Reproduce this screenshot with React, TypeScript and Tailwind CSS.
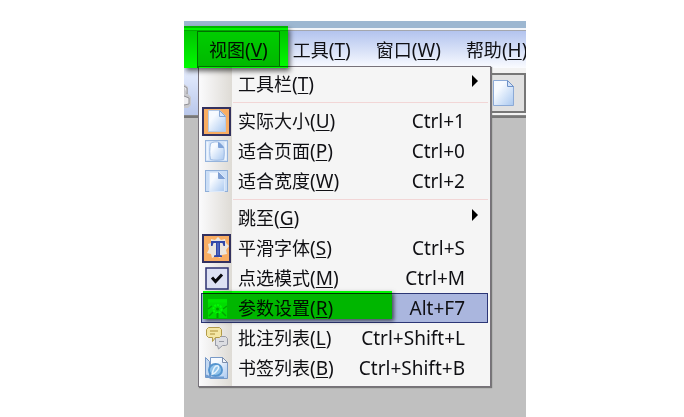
import React from 'react';

const FONT = "font-['Noto_Sans','Noto_Sans_CJK_SC',sans-serif]";

type IconName = 'page' | 'fitPage' | 'fitWidth' | 'smooth' | 'check' | 'settings' | 'comments' | 'bookmarks';

interface MenuEntry {
    label: string;
    mnemonic: string;
    shortcut?: string;
    icon?: IconName;
    submenu?: boolean;
    checked?: boolean;
    active?: boolean;
}

const GROUPS: MenuEntry[][] = [
    [{ label: '工具栏', mnemonic: 'T', submenu: true }],
    [
        { label: '实际大小', mnemonic: 'U', shortcut: 'Ctrl+1', icon: 'page', checked: true },
        { label: '适合页面', mnemonic: 'P', shortcut: 'Ctrl+0', icon: 'fitPage' },
        { label: '适合宽度', mnemonic: 'W', shortcut: 'Ctrl+2', icon: 'fitWidth' },
    ],
    [
        { label: '跳至', mnemonic: 'G', submenu: true },
        { label: '平滑字体', mnemonic: 'S', shortcut: 'Ctrl+S', icon: 'smooth', checked: true },
        { label: '点选模式', mnemonic: 'M', shortcut: 'Ctrl+M', icon: 'check' },
        { label: '参数设置', mnemonic: 'R', shortcut: 'Alt+F7', icon: 'settings', active: true },
        { label: '批注列表', mnemonic: 'L', shortcut: 'Ctrl+Shift+L', icon: 'comments' },
        { label: '书签列表', mnemonic: 'B', shortcut: 'Ctrl+Shift+B', icon: 'bookmarks' },
    ],
];

const MENUS = [
    { label: '视图', mnemonic: 'V', open: true },
    { label: '工具', mnemonic: 'T' },
    { label: '窗口', mnemonic: 'W' },
    { label: '帮助', mnemonic: 'H' },
];

const Icon: React.FC<{ name: IconName }> = ({ name }) => (
    <svg viewBox="0 0 24 24" className="size-6 shrink-0" aria-hidden="true">
        {name === 'page' && (
            <>
                <path d="M3.500 1.500h11.500l5.500 5.500v15.500h-17z" fill="url(#sheet)" stroke="#b5cae6" />
                <path d="M14.500 1.500v6h6z" fill="#d7e5f8" stroke="#86a6d4" />
            </>
        )}
        {name === 'fitPage' && (
            <>
                <rect x="0.500" y="1.500" width="22" height="21" fill="#d3e3f8" stroke="#96b4dc" />
                <path d="M2.500 3v18M20.500 3v18" stroke="#eef5fe" strokeWidth="2" />
                <path d="M5.500 4.500c3-2 6-2 9-1l4 4c1 4 1 9 0 13-4 1-9 1-13 0-1-5-1-11 0-16z" fill="url(#sheet)" stroke="#9fbce4" />
                <path d="M13.500 3.500v5h5z" fill="#7fa3d8" stroke="#7fa3d8" />
            </>
        )}
        {name === 'fitWidth' && (
            <>
                <rect x="0.500" y="1.500" width="22" height="21" fill="#cbdef6" stroke="#8fafd9" />
                <path d="M4.500 3.500h10l5 5v14h-15z" fill="url(#sheet)" stroke="#dce9fa" />
                <path d="M13.500 3.500v6h6z" fill="#7fa0d4" stroke="#7fa0d4" />
            </>
        )}
        {name === 'smooth' && (
            <>
                <path d="M3 8l3-1 0-4 4 1 3-3 3 3 4-1 1 4 3 3-3 4 1 4-5 1-2 3-4-2-4 2-1-4-4-1 2-4z" fill="#ebe6de" />
                <path d="M6 5h14v5h-1.500l-1-3h-2.500v12l2 .5V21H9v-1.500l2-.5V7H8.500l-1 3H6z" fill="#3148a8" />
                <path d="M13 7v12" stroke="#6d83d2" />
            </>
        )}
        {name === 'check' && (
            <>
                <rect x="1" y="2" width="22" height="21" fill="#dde1f3" stroke="#2c3272" strokeWidth="1.500" />
                <path d="M7 11.500l3.500 4L17 8.500" fill="none" stroke="#08080c" strokeWidth="3" />
            </>
        )}
        {name === 'settings' && (
            <>
                <rect x="2.500" y="2.500" width="20" height="20" fill="#b9dcc6" stroke="#8bb898" />
                <path d="M3 5h19" stroke="#d9e6f6" strokeWidth="3" />
                <path d="M3 13l4-3M22 10l-4 3M4 20l4-4M21 20l-4-4" stroke="#7fa68c" strokeWidth="1.500" />
                <circle cx="12.500" cy="13" r="4" fill="none" stroke="#eefcf4" strokeWidth="2" strokeDasharray="2 1" />
                <circle cx="12.500" cy="13" r="1.500" fill="#7d9b88" />
                <path d="M12.500 17v5" stroke="#7f9f8b" strokeWidth="2" />
            </>
        )}
        {name === 'comments' && (
            <>
                <path d="M10.500 10.500h10l2 2v6l-2 1h-3l-4 3.500-1-3.500h-2z" fill="#dcdde2" stroke="#989ba6" />
                <path d="M14 15.500h5" stroke="#989ba6" />
                <path d="M3.500 1.500h11l2 2v6l-2 2h-4l-3 4v-4h-4l-2-2v-6z" fill="#f4e7a5" stroke="#b39b48" />
                <path d="M5 5h8M5 8h5" stroke="#c4ad5c" strokeWidth="1.500" />
            </>
        )}
        {name === 'bookmarks' && (
            <>
                <path d="M0.500 21.500v-20l4 4v16z" fill="#c3d9f3" stroke="#7597c6" />
                <path d="M5.500 1.500h12l5 5v16h-17z" fill="url(#sheet)" stroke="#7899c7" />
                <path d="M17.500 1.500v5h5z" fill="#f1f5fb" stroke="#7c8eac" />
                <ellipse cx="10.500" cy="14" rx="6.500" ry="6" fill="#8fc2ea" stroke="#5595cf" strokeWidth="2" />
                <path d="M7 19c1-6 3-10 6-9 2 1-1 6-5 8" fill="none" stroke="#e5f3fd" strokeWidth="1.500" />
                <path d="M1 19.500l4 2h14" fill="none" stroke="#6c9bd1" strokeWidth="2" />
            </>
        )}
    </svg>
);

const Label: React.FC<{ label: string; mnemonic: string }> = ({ label, mnemonic }) => (
    <span className="whitespace-nowrap">
        <span className="text-[18px]">{label}</span>(<span className="underline decoration-1 underline-offset-2">{mnemonic}</span>)
    </span>
);

const MenuRow: React.FC<{ entry: MenuEntry }> = ({ entry }) => (
    <button
        type="button"
        role="menuitem"
        className={`relative flex h-[30px] w-full items-center border pr-[22px] text-left ${entry.active ? 'border-[#2c3676] bg-[#aab6de]' : 'border-transparent'}`}
    >
        <span
            className={`flex h-[29px] w-[29px] shrink-0 items-center justify-center ${entry.checked ? 'border-2 border-[#33315f] bg-[#f9ad62]' : ''}`}
        >
            {entry.icon && <Icon name={entry.icon} />}
        </span>
        <span className="ml-[7px] grow">
            <Label label={entry.label} mnemonic={entry.mnemonic} />
        </span>
        {entry.shortcut && <span>{entry.shortcut}</span>}
        {entry.submenu && (
            <svg viewBox="0 0 6 12" className="-mr-[13px] mb-1.5 h-3 w-1.5" aria-hidden="true">
                <path d="M0 0l6 6-6 6z" fill="#000" />
            </svg>
        )}
        {entry.active && (
            <span className="pointer-events-none absolute -top-[3px] right-[95px] bottom-[3px] left-px bg-[#00ff00] mix-blend-multiply shadow-[2px_2px_4px_rgba(0,0,0,0.6)]" />
        )}
    </button>
);

const ViewMenu = () => (
    <div
        role="menu"
        className="absolute top-[35px] left-[14px] w-[293px] border border-[#77727a] bg-[linear-gradient(90deg,#fbfbfd_0,#dedbd5_33px,#f5f5f5_33px)] p-0.5 pb-[3px] shadow-[1px_1px_1px_#777]"
    >
        {GROUPS.map((group, i) => (
            <React.Fragment key={i}>
                {i > 0 && <hr className="my-[3px] ml-8 border-[#f2d6d6]" />}
                {group.map((entry) => (
                    <MenuRow key={entry.label} entry={entry} />
                ))}
            </React.Fragment>
        ))}
    </div>
);

const App = () => (
    <div className={`flex min-h-screen flex-col bg-white pt-[21px] pr-[158px] pl-[184px] text-[19px] leading-6 text-[#101014] ${FONT}`}>
        <svg className="absolute size-0" aria-hidden="true">
            <defs>
                <linearGradient id="sheet" x1="0" y1="0" x2="1" y2="1">
                    <stop offset="0.3" stopColor="#f6faff" />
                    <stop offset="1" stopColor="#a9c8f0" />
                </linearGradient>
            </defs>
        </svg>
        <div className="isolate flex grow flex-col overflow-hidden bg-[#c0c0c0]">
            <div className="h-[7px] bg-[#9db7d1]" />
            <div className="h-[3px] border-b border-[#a4a7ae] bg-[#f4f6fa]" />
            <div className="relative">
                <nav className="flex h-[37px] gap-px bg-linear-to-b from-[#b3c4ee] to-[#fafbff] pl-[13px]">
                    {MENUS.map((menu) => (
                        <button
                            key={menu.label}
                            type="button"
                            className={`shrink-0 border px-[11px] ${menu.open ? 'border-[#66707c] bg-linear-to-b from-[#cdcdcd] to-[#b8b8b8]' : 'border-transparent'}`}
                        >
                            <Label label={menu.label} mnemonic={menu.mnemonic} />
                        </button>
                    ))}
                </nav>
                <div className="flex h-[48px] justify-between border-b border-[#888] bg-linear-to-b from-[#e8efff] to-[#b9c7ea]">
                    <svg viewBox="0 0 8 28" className="mt-3.5 h-7 w-2" aria-hidden="true">
                        <path d="M0 2l4 3v7l3 3v8l-3 3H0z" fill="#c8c8cc" />
                        <path d="M0 4l3 2v6M0 14l5 2v6l-5 1" fill="#ededf0" stroke="#8f8f95" />
                    </svg>
                    <div className="flex w-11 flex-col bg-[#f2f2f2]">
                        <button type="button" aria-label="页面" className="mt-[5px] flex h-10 items-center justify-center border-2 border-[#777] bg-[#e1e1e1]">
                            <svg viewBox="0 0 24 28" className="h-7 w-6" aria-hidden="true">
                                <path d="M1.500 1.500h14l6 6v19h-20z" fill="url(#sheet)" stroke="#8caad6" />
                                <path d="M15.500 1.500v6h6z" fill="#d3e2f7" stroke="#6e92c8" />
                            </svg>
                        </button>
                    </div>
                </div>
                <div className="h-0.5 bg-[#777]" />
                <ViewMenu />
                <div className="pointer-events-none absolute -top-[5px] left-0 h-[42px] w-[104px] bg-[#00ff00] mix-blend-multiply shadow-[2px_3px_5px_rgba(0,0,0,0.6)]" />
            </div>
        </div>
    </div>
);

export default App;
